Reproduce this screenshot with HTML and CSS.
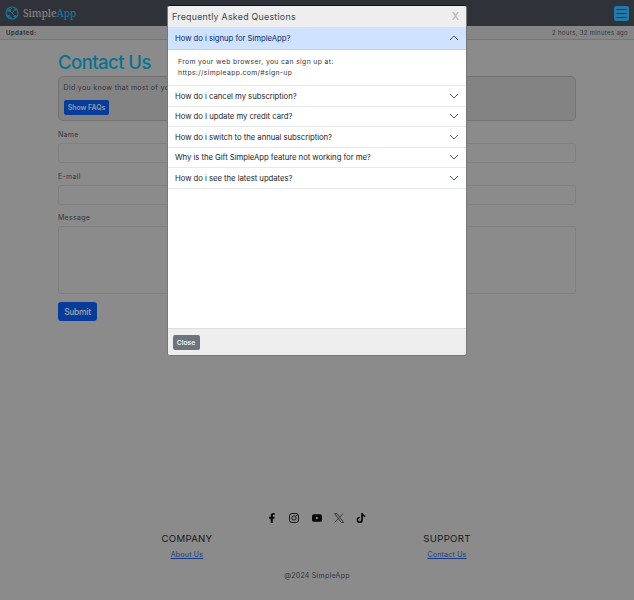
FILE: index.html
```html
<!DOCTYPE html>
<html lang="en">
<head>
<meta charset="utf-8">
<title>SimpleApp - Contact Us</title>
<link rel="stylesheet" href="styles.css">
</head>
<body>
<header class="navbar">
  <div class="brand">
    <svg class="brand-logo" viewBox="0 0 14 14" fill="none" stroke="currentColor"><circle cx="7" cy="7" r="6" stroke-width="1.2"/><path d="M1.500 5.500 4.500 4.500 7 7l3.500-3.800M7 7l3.200 3.600M4.500 4.500l3-3M1.500 8.500l2.500 1.500 3 2.500" stroke-width="1"/><g fill="currentColor" stroke="none"><circle cx="4.500" cy="4.500" r="1.400"/><circle cx="10.300" cy="3.500" r="1"/><circle cx="10" cy="10.300" r="1.200"/><circle cx="4" cy="10" r="1.200"/></g></svg>
    <span class="brand-name">Simple<span class="accent">App</span></span>
  </div>
  <svg class="menu" viewBox="0 0 15 15"><rect width="15" height="15" rx="2" fill="#217aa8"/><path d="M2.500 3.500h10M2.500 7.500h10M2.500 11.500h10" stroke="#30323a" stroke-width="1.200"/></svg>
</header>
<div class="status"><b>Updated:</b><span>2 hours, 32 minutes ago</span></div>
<main class="content">
  <h1>Contact Us</h1>
  <section class="notice">
    <p>Did you know that most of your</p>
    <button class="btn btn-small">Show FAQs</button>
  </section>
  <form class="form">
    <label for="name">Name</label>
    <input id="name" type="text">
    <label for="email">E-mail</label>
    <input id="email" type="email">
    <label for="message">Message</label>
    <textarea id="message"></textarea>
    <button class="btn btn-submit" type="button">Submit</button>
  </form>
</main>
<footer class="footer">
  <div class="social">
    <svg viewBox="0 0 16 16"><path d="M9.300 16V9.100h2.500l.5-3H9.300V4.300c0-.9.4-1.600 1.700-1.600h1.400V.2S11.200 0 10 0C7.500 0 6 1.500 6 3.900v2.200H3.400v3H6V16z"/></svg>
    <svg viewBox="0 0 16 16" stroke="currentColor" stroke-width="1.400"><rect x=".8" y=".8" width="14.400" height="14.400" rx="4" fill="none"/><circle cx="8" cy="8" r="3.400" fill="none"/><circle cx="12.200" cy="3.800" r=".4"/></svg>
    <svg viewBox="0 0 16 16"><path fill-rule="evenodd" d="M3 2h10q3 0 3 3v6q0 3-3 3H3q-3 0-3-3V5q0-3 3-3zm3.400 3.600v4.800L10.600 8z"/></svg>
    <svg viewBox="0 0 16 16" fill="none" stroke="currentColor"><path fill="none" stroke-width="1" d="M1 1h3.800L15.200 15h-3.800zM14.200 1 8.800 7M7 9l-5.800 6"/></svg>
    <svg viewBox="0 0 16 16"><path d="M8.300 0h2.700c.144.715.540 1.617 1.235 2.512C12.895 3.389 13.797 4 15 4v2.500c-1.753 0-3.070-.6-4-1.300V11a5 5 0 1 1-5-5v2.600a2.400 2.400 0 1 0 2.300 2.400z"/></svg>
  </div>
  <div class="columns">
    <div class="column"><h2>COMPANY</h2><a href="#">About Us</a></div>
    <div class="column"><h2>SUPPORT</h2><a href="#">Contact Us</a></div>
  </div>
  <p class="copyright">@2024 SimpleApp</p>
</footer>

<div class="modal" role="dialog" aria-label="Frequently Asked Questions">
  <div class="modal-header"><span>Frequently Asked Questions</span><span class="modal-x">X</span></div>
  <div class="accordion">
    <div class="question open"><span>How do i signup for SimpleApp?</span><svg class="chevron" viewBox="0 0 10 6"><path d="M1 5l4-4 4 4"/></svg></div>
    <div class="answer">From your web browser, you can sign up at:<br>https://simpleapp.com/#sign-up</div>
    <div class="question"><span>How do i cancel my subscription?</span><svg class="chevron" viewBox="0 0 10 6"><path d="M1 1l4 4 4-4"/></svg></div>
    <div class="question"><span>How do I update my credit card?</span><svg class="chevron" viewBox="0 0 10 6"><path d="M1 1l4 4 4-4"/></svg></div>
    <div class="question"><span>How do i switch to the annual subscription?</span><svg class="chevron" viewBox="0 0 10 6"><path d="M1 1l4 4 4-4"/></svg></div>
    <div class="question"><span>Why is the Gift SimpleApp feature not working for me?</span><svg class="chevron" viewBox="0 0 10 6"><path d="M1 1l4 4 4-4"/></svg></div>
    <div class="question"><span>How do i see the latest updates?</span><svg class="chevron" viewBox="0 0 10 6"><path d="M1 1l4 4 4-4"/></svg></div>
  </div>
  <div class="modal-footer"><button class="btn btn-close">Close</button></div>
</div>
</body>
</html>
```
FILE: styles.css
```css
* { box-sizing: border-box; }
body {
  margin: 0;
  height: 600px;
  display: flex;
  flex-direction: column;
  overflow: hidden;
  background: #8b8b8b;
  color: #32353b;
  font-family: Inter, sans-serif;
  font-size: 7px;
  letter-spacing: .27px;
}
h1, h2, p { margin: 0; font-weight: 400; }
button, input, textarea { font: inherit; display: block; }

.navbar {
  flex: none;
  height: 26px;
  padding: 0 5px;
  display: flex;
  align-items: center;
  justify-content: space-between;
  background: #30323a;
}
.brand { display: flex; align-items: center; gap: 4px; color: #15779a; }
.brand-logo { width: 14px; height: 14px; }
.brand-name {
  color: #858585;
  font: 500 10.3px/14px "Noto Serif", "DejaVu Serif", serif;
  letter-spacing: -.15px;
}
.accent { color: #15779a; }
.menu { width: 15px; height: 15px; }

.status {
  flex: none;
  height: 14px;
  padding: 0 6px;
  display: flex;
  align-items: center;
  justify-content: space-between;
  background: #868686;
  border-bottom: 1px solid #767676;
  font-size: 6px;
  letter-spacing: .32px;
}
.status b { letter-spacing: .45px; }

.content { width: 518px; margin: 0 auto; flex: none; }
h1 { height: 36px; padding-top: 10px; font-size: 18.5px; line-height: 24px; font-weight: 500; letter-spacing: -.55px; color: #087391; }
.notice {
  height: 45px;
  padding: 5px;
  background: #838383;
  border: 1px solid #737373;
  border-radius: 5px;
}
.notice p { line-height: 11px; white-space: nowrap; letter-spacing: .33px; margin-left: -.5px; }
.btn {
  padding: 0;
  border: 0;
  border-radius: 2px;
  background: #073c9b;
  color: #929baa;
  letter-spacing: 0;
  text-align: center;
}
.btn-small { width: 45px; height: 15px; margin-top: 7px; font-size: 6.9px; font-weight: 600; }
.form { padding-top: 8px; }
.form label { display: block; height: 14px; line-height: 11px; letter-spacing: .3px; }
.form input, .form textarea {
  width: 100%;
  height: 20px;
  margin: 0 0 7.5px;
  background: transparent;
  border: 1px solid #808080;
  border-radius: 3px;
  resize: none;
}
.form textarea { height: 68px; margin-bottom: 8px; }
.btn-submit { width: 39px; height: 19px; font-size: 8.3px; font-weight: 600; letter-spacing: -.25px; border-radius: 3px; }

.footer { margin-top: auto; height: 87px; }
.social { display: flex; justify-content: center; gap: 12.4px; padding-right: 1px; color: #090909; }
.social svg { width: 10px; height: 10px; fill: currentColor; }
.columns { display: flex; width: 520px; margin: 8px auto 0; }
.column { width: 50%; text-align: center; }
.column h2 { font-size: 9.6px; line-height: 16px; letter-spacing: .3px; color: #15171b; }
.column a { display: block; line-height: 12px; margin-top: 2px; color: #173b81; letter-spacing: .22px; }
.copyright { margin-top: 9px; line-height: 12px; text-align: center; }

.modal {
  position: absolute;
  left: 167px;
  top: 5px;
  width: 300px;
  height: 351px;
  display: flex;
  flex-direction: column;
  overflow: hidden;
  background: #fff;
  border: 1px solid #777;
  border-top-color: #111;
  border-radius: 3px;
}
.modal-header {
  flex: none;
  height: 21px;
  padding: 0 7px 0 4px;
  display: flex;
  align-items: center;
  justify-content: space-between;
  background: #eee;
  font-size: 8.8px;
  letter-spacing: .27px;
  color: #42454d;
}
.modal-x { font-size: 10.5px; font-weight: 500; color: #b5b5b5; letter-spacing: 0; }
.accordion { flex: 1; letter-spacing: 0; }
.question {
  height: 20.5px;
  padding: 0 7.5px 0 7px;
  display: flex;
  align-items: center;
  justify-content: space-between;
  border-bottom: 1px solid #e8e9eb;
  font-size: 7.75px;
  letter-spacing: -.05px;
  color: #212529;
}
.question.open { height: 23px; background: #cfe2ff; border-color: #bcd1ef; color: #052c65; }
.chevron { width: 10px; height: 6px; fill: none; stroke: #394653; stroke-width: .9; }
.answer {
  height: 36px;
  padding: 7px 10px;
  border-bottom: 1px solid #e8e9eb;
  font-size: 6.8px;
  line-height: 10.5px;
  letter-spacing: .36px;
  color: #32353b;
}
.modal-footer { flex: none; height: 27px; padding: 5.5px 4.5px; background: #eee; border-top: 1px solid #ddd; }
.btn-close { width: 27px; height: 15px; background: #6c757d; color: #fff; font-size: 6.8px; font-weight: 500; }
```
